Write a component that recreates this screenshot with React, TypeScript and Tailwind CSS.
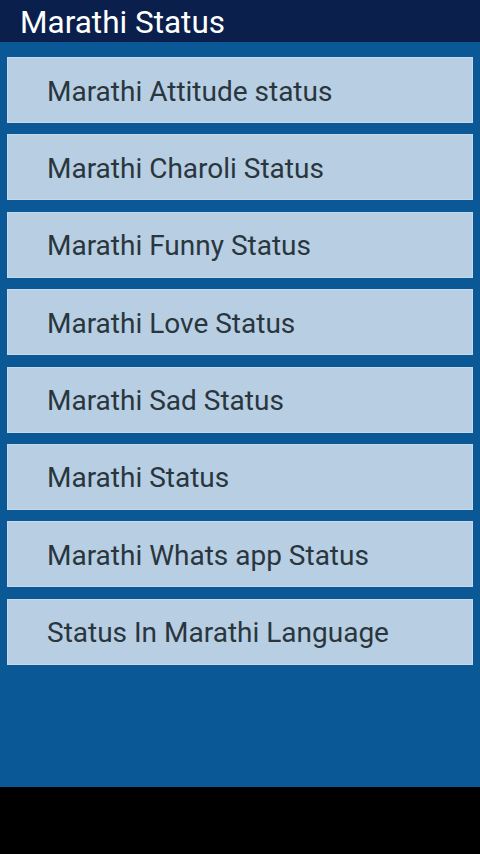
import React from "react"

const items = [
	"Marathi Attitude status",
	"Marathi Charoli Status",
	"Marathi Funny Status",
	"Marathi Love Status",
	"Marathi Sad Status",
	"Marathi Status",
	"Marathi Whats app Status",
	"Status In Marathi Language",
]

export default function App() {
	return (
		<div className="w-[480px] h-[854px] flex flex-col bg-black font-['Roboto',sans-serif]">
			<div className="h-[42px] bg-[#0a1f4c] flex items-center pl-[20px] pt-[3px]">
				<span className="text-white text-[31.5px] leading-none">Marathi Status</span>
			</div>
			<div className="h-[745px] bg-[#0a5896] flex flex-col gap-[11.4px] pt-[15px] px-[7px]">
				{items.map((item) => (
					<div
						key={item}
						className="h-[66px] bg-[#b7cee3] flex items-center pl-[39px] pt-[3px] border border-[#c6d9ea]">
						<span className="text-[28px] text-[#2a363e] leading-none">{item}</span>
					</div>
				))}
			</div>
		</div>
	)
}
